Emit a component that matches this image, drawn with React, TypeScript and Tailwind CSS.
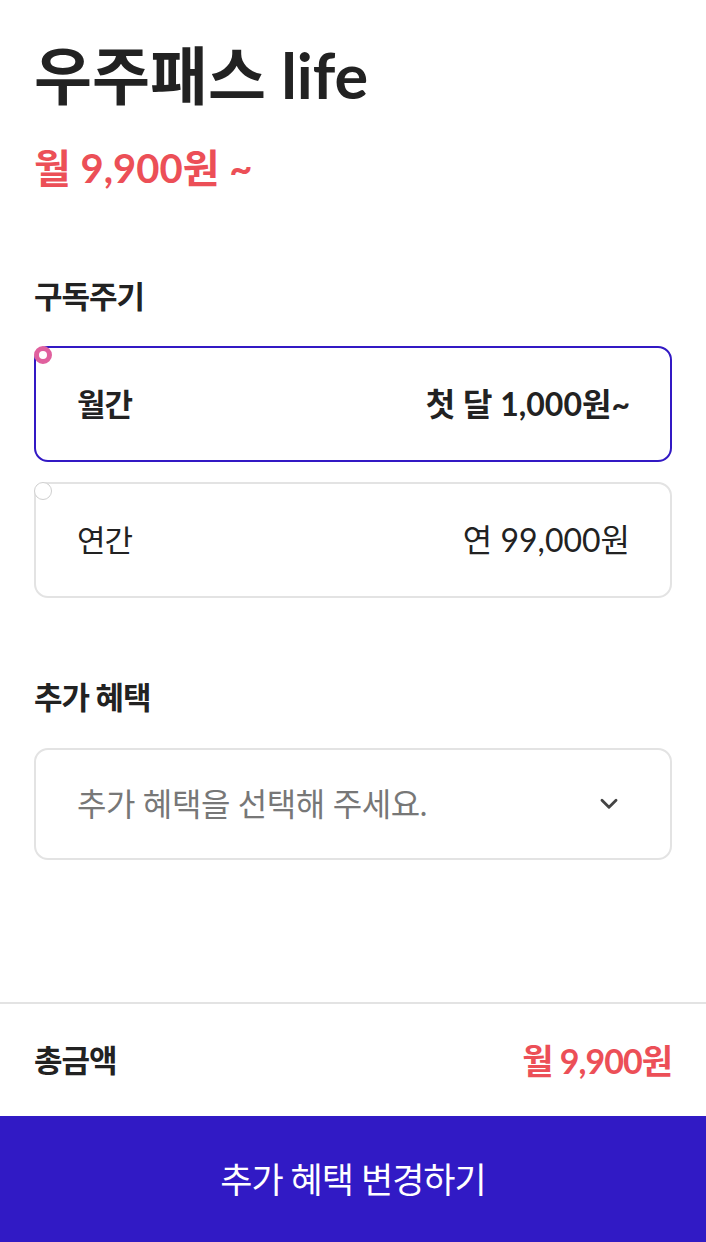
import React from "react";

const font = { fontFamily: "Lato, 'Noto Sans CJK KR', sans-serif" };

function Radio({ selected }: { selected: boolean }) {
  return selected ? (
    <span className="absolute -left-[2px] -top-[2px] w-[18px] h-[18px] rounded-full border-[5px] border-[#e0609e] bg-white" />
  ) : (
    <span className="absolute -left-[2px] -top-[2px] w-[18px] h-[18px] rounded-full border border-[#cfcfcf] bg-white" />
  );
}

export default function App() {
  return (
    <div className="w-[706px] h-[1242px] bg-white flex flex-col text-[#222]" style={font}>
      <div className="flex-1 px-[34px]">
        <h1 className="mt-[35px] text-[63px] leading-[80px] font-bold tracking-[0px]">우주패스 life</h1>
        <div className="mt-[29px] text-[40px] leading-[48px] font-bold text-[#ec4f57] tracking-[0px]">월 9,900원 ~</div>

        <div className="mt-[84px] text-[31px] leading-[40px] font-bold tracking-[-1px]">구독주기</div>
        <div className="mt-[30px] flex flex-col gap-[20px]">
          <div className="relative h-[116px] rounded-[14px] border-2 border-[#3219c4] flex items-center justify-between pl-[41px] pr-[40px]">
            <Radio selected />
            <span className="text-[31px] font-bold tracking-[-1px]">월간</span>
            <span className="text-[32px] font-bold tracking-[0px]">첫 달 1,000원~</span>
          </div>
          <div className="relative h-[116px] rounded-[14px] border-2 border-[#e3e3e3] flex items-center justify-between pl-[41px] pr-[40px]">
            <Radio selected={false} />
            <span className="text-[31px] tracking-[-1px]">연간</span>
            <span className="text-[32px] tracking-[0px]">연 99,000원</span>
          </div>
        </div>

        <div className="mt-[79px] text-[31px] leading-[40px] font-bold tracking-[-1px]">추가 혜택</div>
        <div className="mt-[31px] h-[112px] rounded-[14px] border-2 border-[#e3e3e3] flex items-center justify-between pl-[41px] pr-[48px]">
          <span className="text-[32px] text-[#777] tracking-[-0.4px]">추가 혜택을 선택해 주세요.</span>
          <svg width="26" height="26" viewBox="0 0 24 24" fill="none" stroke="#444" strokeWidth="2.6" strokeLinecap="round" strokeLinejoin="round">
            <path d="M5.5 8.5l6.5 6.5 6.5-6.5" />
          </svg>
        </div>
      </div>

      <div className="border-t-2 border-[#e3e3e3] h-[114px] px-[34px] flex items-center justify-between">
        <span className="text-[31px] font-bold tracking-[-1px]">총금액</span>
        <span className="text-[34px] font-bold text-[#ec4f57] tracking-[-1px]">월 9,900원</span>
      </div>
      <button className="h-[126px] w-full bg-[#311ac5] text-white text-[35px] tracking-[-1px] flex items-center justify-center">
        추가 혜택 변경하기
      </button>
    </div>
  );
}
